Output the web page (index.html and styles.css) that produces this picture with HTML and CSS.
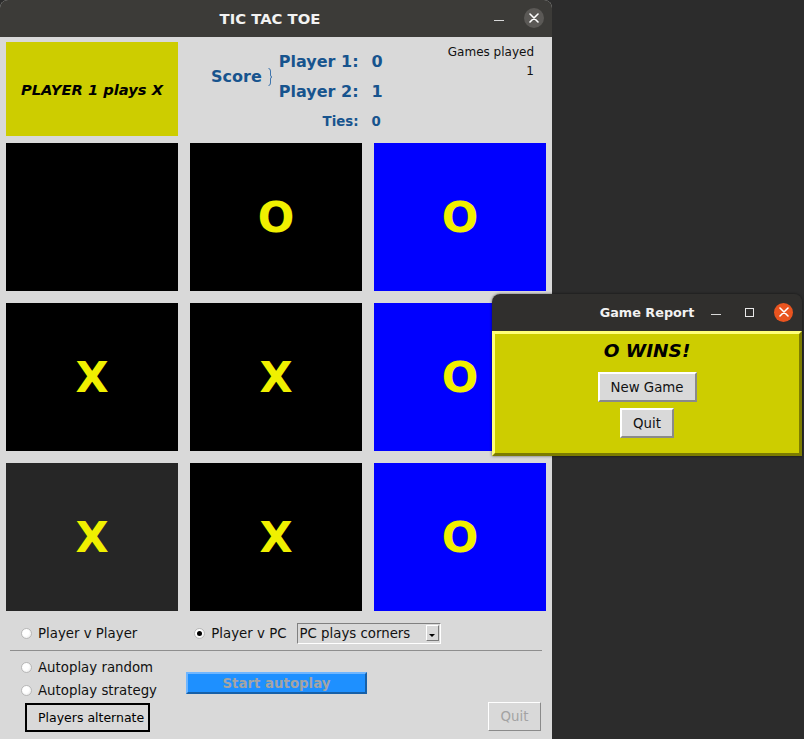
FILE: index.html
```html
<!DOCTYPE html>
<html>
<head>
<meta charset="utf-8">
<title>TIC TAC TOE</title>
<link rel="stylesheet" href="styles.css">
</head>
<body>
<div class="desktop">
  <div class="main">
    <div class="titlebar">
      <div class="title main-title">TIC TAC TOE</div>
      <div class="wm-controls">
        <span class="wm-min"></span>
        <span class="wm-close gray">
          <svg width="10" height="10" viewBox="0 0 10 10"><path d="M1 1 L9 9 M9 1 L1 9" stroke="#fff" stroke-width="1.6" stroke-linecap="round"/></svg>
        </span>
      </div>
    </div>
    <div class="header">
      <div class="turn-box">PLAYER 1 plays X</div>
      <div class="score">
        <div class="score-label">Score</div>
        <div class="brace">
          <svg width="6" height="18" viewBox="0 0 6 18"><path d="M1.5 0.5 Q3.5 0.5 3.5 3 L3.5 7 Q3.5 9 5 9 Q3.5 9 3.5 11 L3.5 15 Q3.5 17.5 1.5 17.5" fill="none" stroke="#3f75ad" stroke-width="1"/></svg>
        </div>
        <div class="p-label r1">Player 1:</div><div class="p-val r1">0</div>
        <div class="p-label r2">Player 2:</div><div class="p-val r2">1</div>
        <div class="p-label r3 ties">Ties:</div><div class="p-val r3 ties">0</div>
      </div>
      <div class="games">Games played<br>1</div>
    </div>
    <div class="board">
      <div class="cell black"></div>
      <div class="cell black">O</div>
      <div class="cell blue">O</div>
      <div class="cell black">X</div>
      <div class="cell black">X</div>
      <div class="cell blue">O</div>
      <div class="cell dark">X</div>
      <div class="cell black">X</div>
      <div class="cell blue">O</div>
    </div>
    <div class="mode-row">
      <div class="radio-item"><span class="radio"></span><span>Player v Player</span></div>
      <div class="radio-item pc"><span class="radio on"></span><span>Player v PC</span></div>
      <div class="dropdown"><span>PC plays corners</span><span class="dd-btn"><span class="dd-arrow"></span></span></div>
    </div>
    <div class="separator"></div>
    <div class="auto-section">
      <div class="auto-col">
        <div class="radio-item auto"><span class="radio"></span><span>Autoplay random</span></div>
        <div class="radio-item auto"><span class="radio"></span><span>Autoplay strategy</span></div>
        <div class="alt-box">Players alternate</div>
      </div>
      <div class="start-btn">Start autoplay</div>
      <div class="quit-btn disabled">Quit</div>
    </div>
  </div>

  <div class="report">
    <div class="titlebar report-bar">
      <div class="title report-title">Game Report</div>
      <div class="wm-controls report-controls">
        <span class="wm-min"></span>
        <span class="wm-max"></span>
        <span class="wm-close orange">
          <svg width="10" height="10" viewBox="0 0 10 10"><path d="M1 1 L9 9 M9 1 L1 9" stroke="#fff" stroke-width="1.6" stroke-linecap="round"/></svg>
        </span>
      </div>
    </div>
    <div class="report-body">
      <div class="wins">O WINS!</div>
      <div class="btn new-game">New Game</div>
      <div class="btn quit-small">Quit</div>
    </div>
  </div>
</div>
</body>
</html>
```

FILE: styles.css
```css
html, body {
  margin: 0;
  padding: 0;
}
body {
  background: #2c2c2c;
  font-family: "DejaVu Sans", sans-serif;
  font-size: 13.33px;
  color: #000;
}
.desktop {
  position: relative;
  width: 804px;
  height: 739px;
  overflow: hidden;
}
.main {
  width: 552px;
  height: 739px;
  background: #d9d9d9;
  display: flex;
  flex-direction: column;
  border-radius: 8px 8px 0 0;
  overflow: hidden;
}
.titlebar {
  height: 37px;
  background: #3c3b38;
  display: flex;
  align-items: center;
  flex-shrink: 0;
}
.title {
  flex: 1;
  text-align: center;
  color: #f2f2f2;
  font-weight: bold;
}
.main-title {
  font-size: 14.8px;
  padding-left: 56px;
}
.wm-controls {
  display: flex;
  align-items: center;
  width: 68px;
}
.wm-min {
  width: 10px;
  height: 1px;
  background: #d8d8d8;
  margin-left: 10px;
  margin-top: 3px;
}
.wm-close {
  width: 20px;
  height: 20px;
  border-radius: 50%;
  display: flex;
  align-items: center;
  justify-content: center;
  margin-left: 20px;
  margin-top: -1px;
}
.wm-close.gray { background: #5b5956; }
.wm-close.orange { background: #e9541f; width: 19px; height: 19px; }

.header {
  height: 106px;
  display: flex;
  padding: 5px 6px 0;
  box-sizing: border-box;
  flex-shrink: 0;
}
.turn-box {
  width: 172px;
  height: 94px;
  background: #cdcd00;
  display: flex;
  align-items: center;
  justify-content: center;
  font-weight: bold;
  font-style: italic;
  font-size: 14.7px;
}
.score {
  display: grid;
  grid-template-columns: auto 17px auto auto;
  grid-template-rows: 30px 30px 30px;
  margin-left: 33px;
  margin-top: 4px;
  color: #17548e;
  font-weight: bold;
  font-size: 16px;
  white-space: nowrap;
}
.score-label {
  grid-column: 1;
  grid-row: 1 / 3;
  align-self: center;
  margin-top: 1px;
}
.brace {
  grid-column: 2;
  grid-row: 1 / 3;
  align-self: center;
  padding-left: 5px;
  height: 18px;
  margin-top: 1px;
}
.brace svg { display: block; }
.p-label {
  grid-column: 3;
  text-align: right;
  align-self: center;
}
.p-val {
  grid-column: 4;
  padding-left: 13px;
  align-self: center;
}
.r1 { grid-row: 1; }
.r2 { grid-row: 2; }
.r3 { grid-row: 3; }
.ties { font-size: 13.33px; }
.games {
  margin-left: auto;
  margin-right: 12px;
  margin-top: 1px;
  text-align: right;
  font-size: 12px;
  line-height: 19px;
  color: #111;
}
.board {
  display: grid;
  grid-template-columns: repeat(3, 172px);
  grid-template-rows: repeat(3, 148px);
  gap: 12px;
  padding: 0 6px;
}
.cell {
  display: flex;
  align-items: center;
  justify-content: center;
  font-weight: bold;
  font-size: 43px;
  color: #f0f000;
}
.cell.black { background: #000; }
.cell.blue { background: #0000ff; }
.cell.dark { background: #262626; }

.mode-row {
  display: flex;
  align-items: center;
  height: 22px;
  margin-top: 11px;
  padding-left: 21px;
}
.radio-item {
  display: flex;
  align-items: center;
  color: #111;
}
.radio {
  width: 11px;
  height: 11px;
  box-sizing: border-box;
  border-radius: 50%;
  background: radial-gradient(circle at 40% 40%, #ffffff 40%, #e4e4e4 100%);
  border: 1px solid #b8b8b8;
  margin-right: 6px;
  display: flex;
  align-items: center;
  justify-content: center;
}
.radio.on::after {
  content: "";
  width: 5px;
  height: 5px;
  border-radius: 50%;
  background: #000;
}
.radio-item.pc { margin-left: 57px; }
.dropdown {
  margin-left: 10px;
  width: 144px;
  height: 21px;
  box-sizing: border-box;
  border: 1px solid;
  border-color: #808080 #ffffff #ffffff #808080;
  display: flex;
  align-items: center;
  padding-left: 2px;
  color: #111;
}
.dd-btn {
  margin-left: auto;
  margin-right: 1px;
  width: 13px;
  height: 16px;
  box-sizing: border-box;
  border: 1px solid;
  border-color: #ffffff #7a7a7a #7a7a7a #ffffff;
  background: #d9d9d9;
  display: flex;
  align-items: flex-end;
  justify-content: center;
  padding-bottom: 3px;
}
.dd-arrow {
  width: 0;
  height: 0;
  border-left: 3px solid transparent;
  border-right: 3px solid transparent;
  border-top: 3px solid #000;
}
.separator {
  height: 1px;
  background: #8e8e8e;
  margin: 6px 10px 0;
}
.auto-section {
  display: flex;
  padding: 0 11px 0 21px;
}
.auto-col {
  width: 165px;
  display: flex;
  flex-direction: column;
  padding-top: 5px;
}
.radio-item.auto { height: 23px; }
.alt-box {
  margin-top: 1px;
  margin-left: 4px;
  width: 125px;
  height: 29px;
  box-sizing: border-box;
  border: 2px solid #000;
  display: flex;
  align-items: center;
  padding-left: 11px;
  font-size: 12.5px;
}
.start-btn {
  align-self: flex-start;
  margin-top: 21px;
  width: 181px;
  height: 22px;
  box-sizing: border-box;
  background: #1e90ff;
  border: 2px solid;
  border-color: #6fb6ff #1660a8 #1660a8 #6fb6ff;
  color: #a4a4a4;
  font-weight: bold;
  display: flex;
  align-items: center;
  justify-content: center;
}
.quit-btn {
  margin-left: auto;
  align-self: flex-start;
  margin-top: 51px;
  width: 53px;
  height: 29px;
  box-sizing: border-box;
  border: 1px solid;
  border-color: #ffffff #8a8a8a #8a8a8a #ffffff;
  display: flex;
  align-items: center;
  justify-content: center;
  color: #a3a3a3;
}

.report {
  position: absolute;
  left: 492px;
  top: 294px;
  width: 310px;
  height: 162px;
  display: flex;
  flex-direction: column;
  border-radius: 8px 8px 0 0;
  overflow: hidden;
  box-shadow: 0 0 3px rgba(0,0,0,0.6);
}
.report-bar { background: #302f2d; }
.report-title {
  font-size: 12.8px;
  padding-left: 91px;
}
.report-controls {
  width: 91px;
}
.report-controls .wm-min { margin-left: 0; margin-top: 4px; }
.wm-max {
  width: 9px;
  height: 9px;
  box-sizing: border-box;
  border: 1.5px solid #e8e8e8;
  margin-left: 24px;
}
.report-controls .wm-close { margin-left: 20px; }
.report-body {
  flex: 1;
  background: #cdcd00;
  border: 3px solid;
  border-color: #ffff78 #7c7c00 #7c7c00 #ffff78;
  display: flex;
  flex-direction: column;
  align-items: center;
  padding-top: 5px;
}
.wins {
  font-weight: bold;
  font-style: italic;
  font-size: 18.5px;
  line-height: 24px;
}
.btn {
  height: 30px;
  box-sizing: border-box;
  background: #d9d9d9;
  border: 2px solid;
  border-color: #ffffff #8a8a8a #8a8a8a #ffffff;
  display: flex;
  align-items: center;
  justify-content: center;
  color: #111;
}
.new-game { width: 99px; margin-top: 9px; }
.quit-small { width: 54px; margin-top: 6px; }
```
